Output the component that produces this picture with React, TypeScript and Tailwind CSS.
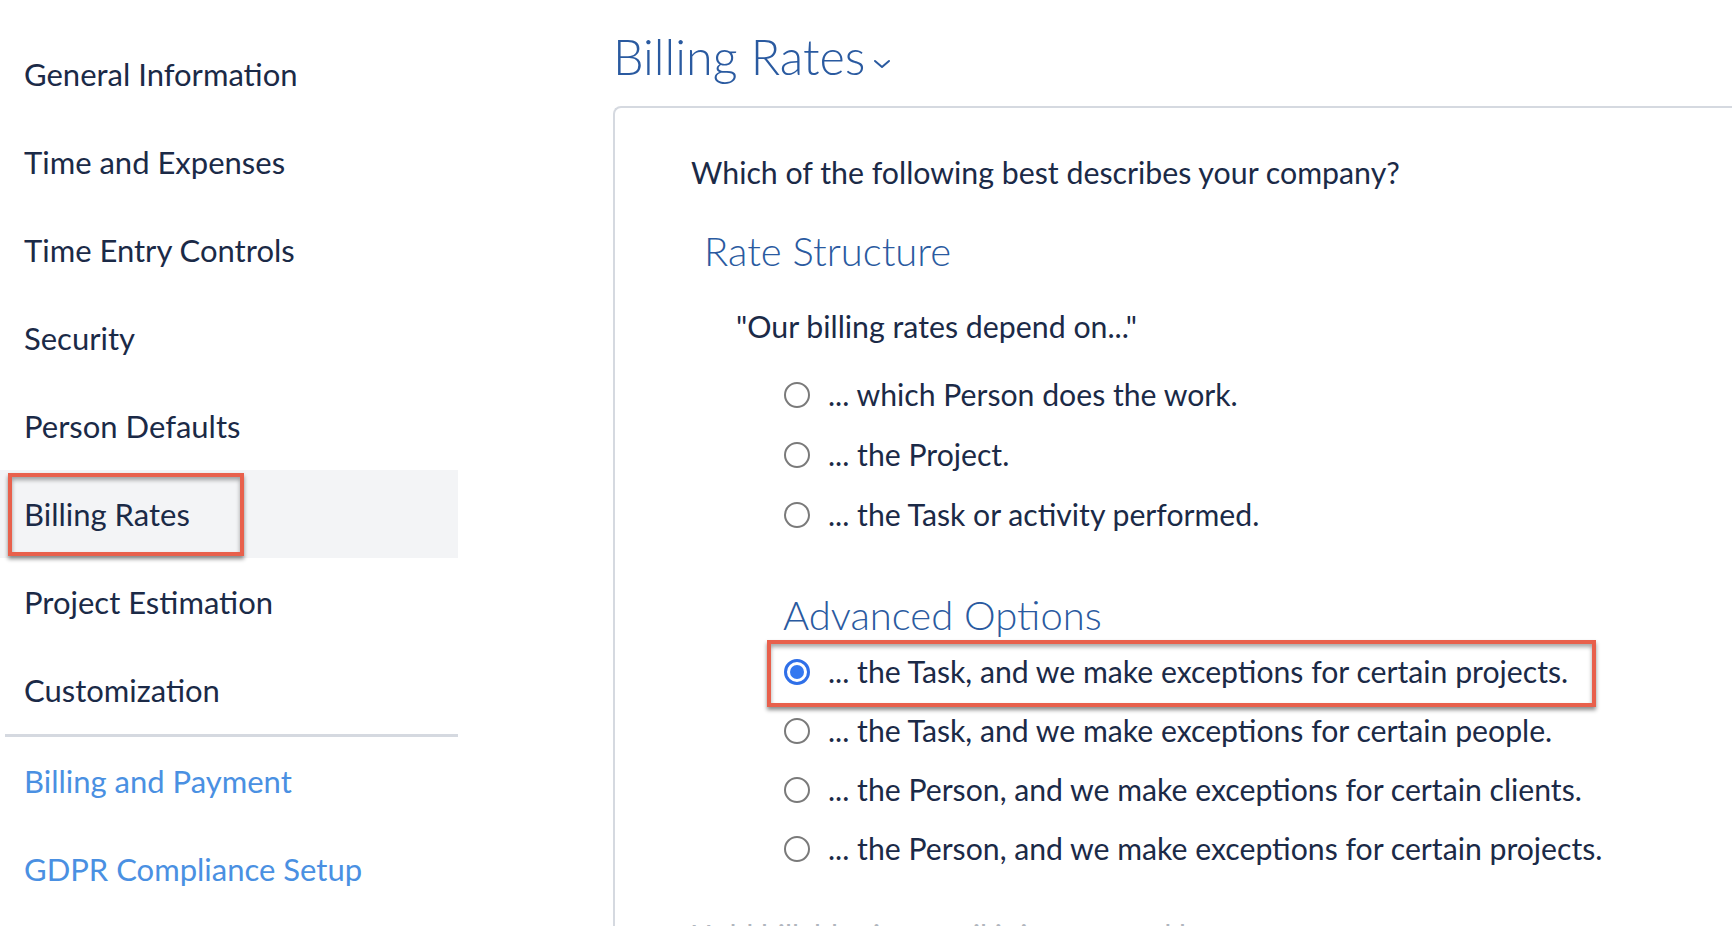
import React from 'react';

const navItems = [
  'General Information',
  'Time and Expenses',
  'Time Entry Controls',
  'Security',
  'Person Defaults',
  'Billing Rates',
  'Project Estimation',
  'Customization',
];

const links = ['Billing and Payment', 'GDPR Compliance Setup'];

const basicOptions = [
  '... which Person does the work.',
  '... the Project.',
  '... the Task or activity performed.',
];

const advancedOptions = [
  '... the Task, and we make exceptions for certain projects.',
  '... the Task, and we make exceptions for certain people.',
  '... the Person, and we make exceptions for certain clients.',
  '... the Person, and we make exceptions for certain projects.',
];

const Radio = ({ checked }: { checked?: boolean }) =>
  checked ? (
    <span className="w-[26px] h-[26px] rounded-full border-[3px] border-[#2f6fe8] flex items-center justify-center shrink-0">
      <span className="w-[14px] h-[14px] rounded-full bg-[#3478f0]"></span>
    </span>
  ) : (
    <span className="w-[26px] h-[26px] rounded-full border-2 border-[#7a7a7a] shrink-0"></span>
  );

const Highlight = ({ className }: { className: string }) => (
  <div
    className={`absolute border-4 border-[#e8604c] shadow-[0_3px_4px_rgba(0,0,0,0.45),inset_0_3px_4px_rgba(0,0,0,0.35)] pointer-events-none ${className}`}
  ></div>
);

const App = () => {
  const selected = 'Billing Rates';

  return (
    <div className="w-full h-[926px] overflow-hidden bg-white flex font-['Lato','Noto_Sans',sans-serif] text-[#1b2a47]">
      <aside className="w-[458px] shrink-0 pt-[30px]">
        {navItems.map((item) => (
          <div
            key={item}
            className={`relative h-[88px] flex items-center pl-[24px] text-[31px] ${item === selected ? 'bg-[#f3f4f6]' : ''}`}
          >
            {item}
            {item === selected && <Highlight className="left-[8px] top-[3px] w-[236px] h-[83px]" />}
          </div>
        ))}
        <div className="ml-[5px] h-[3px] bg-[#d5d9e0]"></div>
        {links.map((item) => (
          <div key={item} className="h-[88px] flex items-center pl-[24px] text-[31px] text-[#4a90e2]">
            {item}
          </div>
        ))}
      </aside>

      <main className="ml-[155px] flex-1 flex flex-col min-h-0 overflow-hidden">
        <div className="h-[106px] shrink-0 pt-[6px] flex items-center">
          <h1 className="text-[48.5px] font-light text-[#2a5aa0] leading-none">Billing Rates</h1>
          <svg width="18" height="10" viewBox="0 0 18 10" className="ml-[8px] mt-[16px]">
            <path d="M2 2 L9 8 L16 2" fill="none" stroke="#2a5aa0" strokeWidth="2" strokeLinecap="round" strokeLinejoin="round" />
          </svg>
        </div>

        <section className="flex-1 shrink-0 border-l-2 border-t-2 border-[#d5d9e0] rounded-tl-[8px]">
          <p className="mt-[45px] pl-[76px] h-[40px] flex items-center text-[30.3px]">
            Which of the following best describes your company?
          </p>
          <h2 className="mt-[33px] pl-[89px] h-[50px] flex items-center text-[40px] font-light text-[#2a5aa0]">
            Rate Structure
          </h2>
          <p className="mt-[31px] pl-[121px] h-[40px] flex items-center text-[30.3px]">"Our billing rates depend on..."</p>

          <div className="mt-[18px] pl-[169px]">
            {basicOptions.map((opt) => (
              <label key={opt} className="h-[60px] flex items-center gap-[18px] text-[30.2px]">
                <Radio />
                <span>{opt}</span>
              </label>
            ))}
          </div>

          <h2 className="mt-[45px] pl-[168px] h-[50px] flex items-center text-[40px] font-light text-[#2a5aa0]">
            Advanced Options
          </h2>

          <div className="mt-[2px] pl-[169px]">
            {advancedOptions.map((opt, i) => (
              <label key={opt} className="relative h-[59px] flex items-center gap-[18px] text-[30.2px]">
                <Radio checked={i === 0} />
                <span>{opt}</span>
                {i === 0 && <Highlight className="left-[-17px] top-[-2px] w-[829px] h-[67px]" />}
              </label>
            ))}
          </div>

          <p className="mt-[37px] pl-[75px] h-[40px] flex items-center text-[30px] text-[#b0b5bd]">
            Hold billable time until it is approved by a manager.
          </p>
        </section>
      </main>
    </div>
  );
};

export default App;
